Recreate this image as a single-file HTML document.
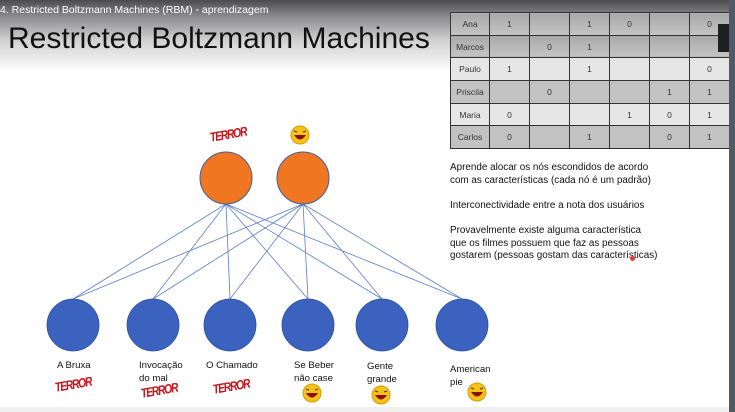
<!DOCTYPE html>
<html><head><meta charset="utf-8"><style>
*{margin:0;padding:0;box-sizing:border-box}
body{width:735px;height:412px;overflow:hidden;position:relative;background:#fff;font-family:"Liberation Sans",sans-serif}
.top{position:absolute;left:0;top:0;width:735px;height:75px;background:linear-gradient(#4b4b4e 0px,#8a8a8c 16px,#d0d0d0 40px,#fff 72px)}
.sub{position:absolute;left:0;top:4px;font-size:10.5px;color:#fff}
.title{position:absolute;left:8px;top:22px;font-size:30px;color:#111;font-family:"Liberation Sans",sans-serif;font-weight:normal}
table{position:absolute;left:450px;top:12px;border-collapse:collapse;font-size:8.5px;color:#333}
td{border:1px solid #333;height:22.7px;text-align:center;width:40px}
td:first-child{width:39px}
tr.d td{background:#c2c2c2}
tr.l td{background:#e6e6e6}
tr.g1 td{background:linear-gradient(#a9a9a9,#c4c4c4)}
.strip{position:absolute;left:729px;top:0;width:6px;height:412px;background:#4d5b67}
.blk{position:absolute;left:718px;top:24px;width:11px;height:28px;background:#1e1f22}
.txt{position:absolute;left:450px;font-size:9.9px;color:#111;line-height:12.5px}
.lab{position:absolute;font-size:9.6px;color:#111;line-height:13px}
.terror{position:absolute;color:#c8141b;font-weight:bold;font-style:italic;font-size:13px;font-family:"Liberation Sans",sans-serif;transform:rotate(-10deg) scaleX(0.8);transform-origin:left;letter-spacing:-1.5px}
.bot{position:absolute;left:0;top:407px;width:729px;height:5px;background:#f0f0f0}
</style></head><body>
<div class="top"></div>
<div class="sub">4. Restricted Boltzmann Machines (RBM) - aprendizagem</div>
<div class="title">Restricted Boltzmann Machines</div>
<table>
<tr class="g1"><td>Ana</td><td>1</td><td></td><td>1</td><td>0</td><td></td><td>0</td></tr>
<tr class="g1"><td>Marcos</td><td></td><td>0</td><td>1</td><td></td><td></td><td></td></tr>
<tr class="l"><td>Paulo</td><td>1</td><td></td><td>1</td><td></td><td></td><td>0</td></tr>
<tr class="d"><td>Priscila</td><td></td><td>0</td><td></td><td></td><td>1</td><td>1</td></tr>
<tr class="l"><td>Maria</td><td>0</td><td></td><td></td><td>1</td><td>0</td><td>1</td></tr>
<tr class="d"><td>Carlos</td><td>0</td><td></td><td>1</td><td></td><td>0</td><td>1</td></tr>
</table>
<div class="blk"></div>
<div class="strip"></div>
<div class="txt" style="top:162px">Aprende alocar os nós escondidos de acordo<br>com as características (cada nó é um padrão)</div>
<div class="txt" style="top:200px">Interconectividade entre a nota dos usuários</div>
<div class="txt" style="top:225px">Provavelmente existe alguma característica<br>que os filmes possuem que faz as pessoas<br>gostarem (pessoas gostam das características)</div>
<svg style="position:absolute;left:0;top:0" width="735" height="412">
<g stroke="#5b7dc8" stroke-width="0.8" fill="none">
<path d="M226 204L73 299M226 204L153 299M226 204L230 299M226 204L308 299M226 204L382 299M226 204L462 299M303 204L73 299M303 204L153 299M303 204L230 299M303 204L308 299M303 204L382 299M303 204L462 299"/>
</g>
<g fill="#f07622" stroke="#41609a" stroke-width="1">
<circle cx="226" cy="178" r="26"/><circle cx="303" cy="178" r="26"/></g>
<g fill="#3a62be" stroke="#2f4f99" stroke-width="0.8">
<circle cx="73" cy="325" r="26"/><circle cx="153" cy="325" r="26"/><circle cx="230" cy="325" r="26"/><circle cx="308" cy="325" r="26"/><circle cx="382" cy="325" r="26"/><circle cx="462" cy="325" r="26"/></g>
<g>
<g transform="translate(300,135)"><circle r="9" fill="#f6c21a" stroke="#d99a00"/><path d="M-6 0Q0 9 6 0Z" fill="#8a1010"/><path d="M-6-4l3 1M6-4l-3 1" stroke="#333"/></g>
<g transform="translate(312,393)"><circle r="9" fill="#f6c21a" stroke="#d99a00"/><path d="M-6 0Q0 9 6 0Z" fill="#8a1010"/><path d="M-6-4l3 1M6-4l-3 1" stroke="#333"/></g>
<g transform="translate(381,395)"><circle r="9" fill="#f6c21a" stroke="#d99a00"/><path d="M-6 0Q0 9 6 0Z" fill="#8a1010"/><path d="M-6-4l3 1M6-4l-3 1" stroke="#333"/></g>
<g transform="translate(477,392)"><circle r="9" fill="#f6c21a" stroke="#d99a00"/><path d="M-6 0Q0 9 6 0Z" fill="#8a1010"/><path d="M-6-4l3 1M6-4l-3 1" stroke="#333"/></g>
</g>
</svg>
<div class="terror" style="left:210px;top:130px">TERROR</div>
<div class="terror" style="left:55px;top:380px">TERROR</div>
<div class="terror" style="left:141px;top:386px">TERROR</div>
<div class="terror" style="left:213px;top:382px">TERROR</div>
<div class="lab" style="left:57px;top:359px">A Bruxa</div>
<div class="lab" style="left:139px;top:359px">Invocação<br>do mal</div>
<div class="lab" style="left:206px;top:359px">O Chamado</div>
<div class="lab" style="left:294px;top:359px">Se Beber<br>não case</div>
<div class="lab" style="left:367px;top:360px">Gente<br>grande</div>
<div class="lab" style="left:450px;top:363px">American<br>pie</div>
<div class="bot"></div>
<div style="position:absolute;left:630px;top:256px;width:5px;height:5px;border-radius:50%;background:#e23b3b"></div>
</body></html>
